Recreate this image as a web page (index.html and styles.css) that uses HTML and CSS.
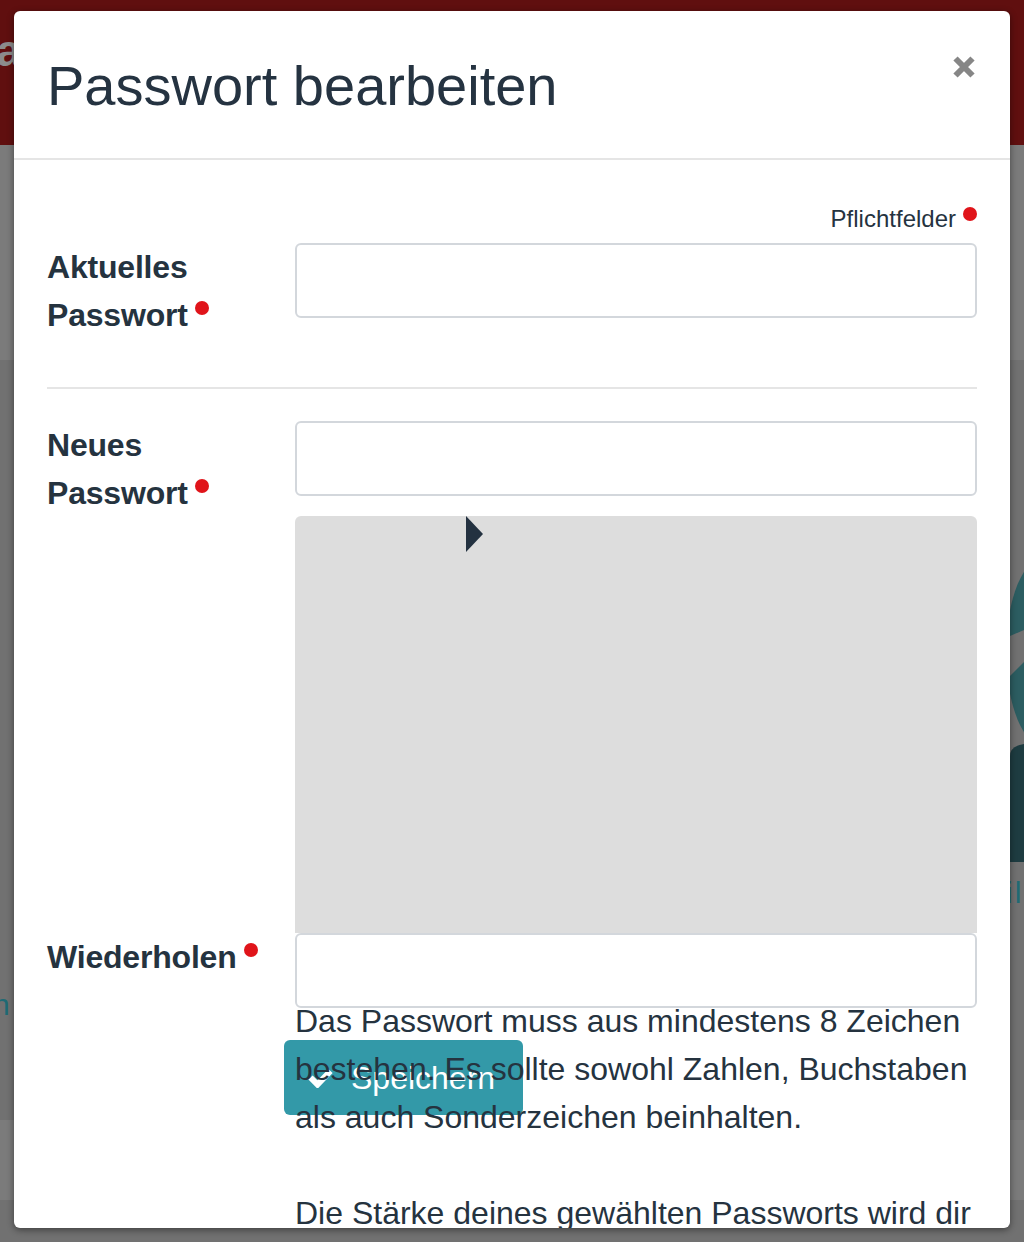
FILE: index.html
```html
<!DOCTYPE html>
<html lang="de">
<head>
<meta charset="utf-8">
<title>Passwort bearbeiten</title>
<link rel="stylesheet" href="styles.css">
</head>
<body>
<div class="page">
  <header class="site-header"><span class="brand">ca</span></header>
  <section class="band band-light band-top"></section>
  <section class="band band-dark band-mid">
    <svg class="logo" width="14" height="310" viewBox="0 0 14 310" aria-hidden="true">
      <ellipse cx="36" cy="100" rx="40" ry="96" fill="#2c5d61"/>
      <polygon points="0,84 14,78 14,110 0,124" fill="#717171"/>
      <path d="M14 192 L14 310 L0 310 L0 204 Q0 194 14 192 Z" fill="#1e3c41"/>
    </svg>
    <span class="bg-text bg-text-right">il</span>
    <span class="bg-text bg-text-left">n</span>
  </section>
  <section class="band band-light band-low"></section>
  <section class="band band-dark band-end"></section>
</div>

<div class="modal" role="dialog" aria-labelledby="modal-title">
  <div class="modal-header">
    <h4 class="modal-title" id="modal-title">Passwort bearbeiten</h4>
    <button class="close" type="button" aria-label="Schließen">
      <svg width="24" height="24" viewBox="0 0 24 24"><path d="M3.5 3.5 L20.5 20.5 M20.5 3.5 L3.5 20.5" stroke="#868686" stroke-width="6" fill="none"/></svg>
    </button>
  </div>
  <div class="modal-body">
    <p class="required-note">Pflichtfelder<span class="req req-small"></span></p>

    <div class="form-group first">
      <label class="form-label">Aktuelles Passwort<span class="req"></span></label>
      <div class="form-field"><input class="form-control" type="password"></div>
    </div>

    <hr class="divider">

    <div class="form-group">
      <label class="form-label">Neues Passwort<span class="req"></span></label>
      <div class="form-field">
        <input class="form-control" type="password">
        <div class="strength-box"><span class="strength-arrow"></span></div>
      </div>
    </div>

    <div class="form-group last">
      <label class="form-label">Wiederholen<span class="req"></span></label>
      <div class="form-field fixed">
        <input class="form-control" type="password">
        <p class="help-text">Das Passwort muss aus mindestens 8 Zeichen bestehen. Es sollte sowohl Zahlen, Buchstaben als auch Sonderzeichen beinhalten.<br><br>Die Stärke deines gewählten Passworts wird dir beim Eintippen unterhalb des Feldes angezeigt.</p>
      </div>
    </div>

    <button class="btn-save" type="button">
      <svg class="check" width="25" height="20" viewBox="0 0 25 20"><path d="M2.5 9.5 L9.5 16.5 L22.5 3" stroke="#ffffff" stroke-width="6" fill="none"/></svg>
      <span>Speichern</span>
    </button>
  </div>
</div>
</body>
</html>
```

FILE: styles.css
```css
* { box-sizing: border-box; }

html, body {
  margin: 0;
  padding: 0;
}

body {
  font-family: "Liberation Sans", Arial, sans-serif;
  color: #25333f;
  background: #717171;
  height: 1242px;
  overflow: hidden;
  position: relative;
}

/* background page */
.page {
  display: flex;
  flex-direction: column;
}

.site-header {
  height: 145px;
  background: #600f0f;
  padding-top: 26px;
  overflow: hidden;
}

.brand {
  display: inline-block;
  margin-left: -28px;
  font-size: 44px;
  font-weight: bold;
  color: #8c8c8c;
}

.band { position: relative; }
.band-light { background: #7b7b7b; }
.band-dark { background: #717171; }
.band-top { height: 215px; }
.band-mid { height: 760px; }
.band-low { height: 80px; }
.band-end { height: 42px; }

.logo {
  position: absolute;
  left: 1010px;
  top: 192px;
}

.bg-text {
  position: absolute;
  font-size: 30px;
  color: #1f6a74;
}

.bg-text-right { left: 1006px; top: 516px; letter-spacing: 2px; }
.bg-text-left { left: -7px; top: 628px; }

/* modal */
.modal {
  position: absolute;
  top: 11px;
  left: 14px;
  width: 996px;
  height: 1217px;
  background: #ffffff;
  border-radius: 6px;
  overflow: hidden;
  box-shadow: 0 2px 7px rgba(0, 0, 0, 0.45);
}

.modal-header {
  display: flex;
  justify-content: space-between;
  align-items: flex-start;
  padding: 44px 33px 41px 33px;
  border-bottom: 2px solid #e5e5e5;
}

.modal-title {
  margin: 0;
  font-size: 56px;
  font-weight: normal;
  line-height: 62px;
  color: #253341;
}

.close {
  border: 0;
  background: none;
  padding: 0;
  margin: 0 1px 0 0;
  width: 24px;
  height: 24px;
  display: block;
}

.close svg { display: block; }

.modal-body {
  padding: 35px 33px;
  font-size: 32px;
  line-height: 48px;
}

.required-note {
  margin: 0;
  text-align: right;
  font-size: 24px;
  line-height: 48px;
}

.req {
  display: inline-block;
  width: 14px;
  height: 14px;
  border-radius: 50%;
  background: #e0141a;
  margin-left: 7px;
  vertical-align: 11px;
}

.req-small { vertical-align: 6px; }

.form-group {
  display: grid;
  grid-template-columns: 248px 1fr;
  align-items: start;
}

.form-label {
  font-weight: bold;
  font-size: 32px;
  line-height: 48px;
  padding-right: 15px;
  color: #25333f;
  letter-spacing: -0.2px;
}

.form-field.fixed { height: 75px; }

.form-control {
  display: block;
  width: 100%;
  height: 75px;
  margin: 0;
  border: 2px solid #d3d7dc;
  border-radius: 6px;
  background: #ffffff;
  font-family: inherit;
  font-size: 32px;
  padding: 0 20px;
}

.divider {
  border: 0;
  border-top: 2px solid #e5e5e5;
  margin: 48px 0 32px 0;
}

.strength-box {
  margin-top: 20px;
  height: 417px;
  background: #dddddd;
  border-radius: 6px 6px 0 0;
}

.strength-arrow {
  display: block;
  width: 0;
  height: 0;
  margin-left: 171px;
  border-left: 17px solid #233140;
  border-top: 18px solid transparent;
  border-bottom: 18px solid transparent;
}

.help-text {
  position: relative;
  z-index: 1;
  margin: -11px 0 0 0;
  font-size: 32px;
  line-height: 48px;
  color: #25333f;
}

.btn-save {
  display: inline-flex;
  align-items: center;
  gap: 18px;
  margin: 32px 0 0 237px;
  height: 75px;
  padding: 0 28px 0 24px;
  border: 0;
  border-radius: 6px;
  background: #3399a8;
  color: #ffffff;
  font-family: inherit;
  font-size: 32px;
  line-height: 48px;
}

.check { display: block; }
```
